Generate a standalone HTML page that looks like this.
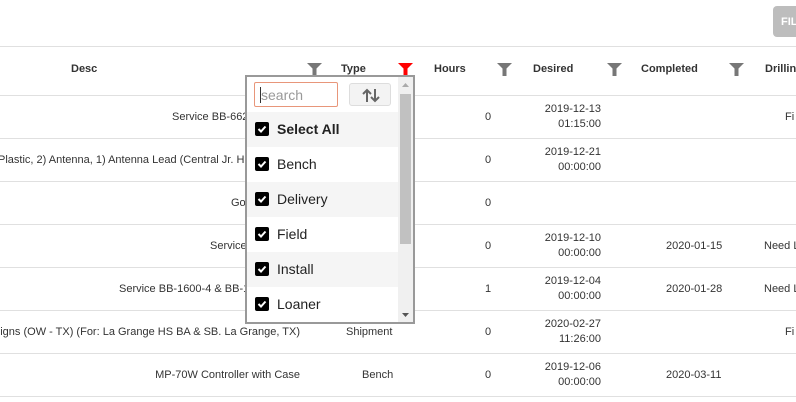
<!DOCTYPE html>
<html><head><meta charset="utf-8"><style>
*{box-sizing:border-box;margin:0;padding:0}
body{width:796px;height:402px;overflow:hidden;background:#fff;font-family:"Liberation Sans",sans-serif;font-size:11px;color:#333;position:relative}
.a{position:absolute;white-space:nowrap}
.hl{position:absolute;left:0;width:796px;height:1px;background:#e0e0e0}
.h{font-weight:bold;font-size:11px;color:#333;top:63px}
.fn{position:absolute;top:63px;width:15px;height:13px}
.r{text-align:right}
.d{line-height:15px;text-align:right}
.pop{position:absolute;left:245px;top:75px;width:170px;height:249px;border:2px solid #999;background:#fff}
.it{position:absolute;left:0;width:151px;height:35px;font-size:14px;color:#222}
.it .cb{position:absolute;left:8px;top:10px;width:14px;height:14px;background:#000;border-radius:2px}
.it .cb svg{position:absolute;left:2px;top:2px}
.it span{position:absolute;left:30px;top:9px}
</style></head><body>
<div class="a" style="left:773px;top:6px;width:30px;height:31px;background:#bdbdbd;border-radius:4px;color:#fff;font-weight:bold;font-size:11px;padding:10px 0 0 8px">FIL</div>
<div class="hl" style="top:46px"></div>
<div class="hl" style="top:95px"></div>
<div class="hl" style="top:138px"></div>
<div class="hl" style="top:181px"></div>
<div class="hl" style="top:224px"></div>
<div class="hl" style="top:267px"></div>
<div class="hl" style="top:310px"></div>
<div class="hl" style="top:353px"></div>
<div class="hl" style="top:396px"></div>

<div class="a h" style="left:71px">Desc</div>
<div class="a h" style="left:341px">Type</div>
<div class="a h" style="left:434px">Hours</div>
<div class="a h" style="left:533px">Desired</div>
<div class="a h" style="left:641px">Completed</div>
<div class="a h" style="left:765px">Drilling</div>
<svg class="fn" style="left:307px" viewBox="0 0 15 13"><path d="M0 0H15L9.5 5.5V13H5.5V5.5Z" fill="#777"/></svg>
<svg class="fn" style="left:398px" viewBox="0 0 15 13"><path d="M0 0H15L9.5 5.5V13H5.5V5.5Z" fill="#f00"/></svg>
<svg class="fn" style="left:497px" viewBox="0 0 15 13"><path d="M0 0H15L9.5 5.5V13H5.5V5.5Z" fill="#777"/></svg>
<svg class="fn" style="left:607px" viewBox="0 0 15 13"><path d="M0 0H15L9.5 5.5V13H5.5V5.5Z" fill="#777"/></svg>
<svg class="fn" style="left:729px" viewBox="0 0 15 13"><path d="M0 0H15L9.5 5.5V13H5.5V5.5Z" fill="#777"/></svg>

<!-- row1 -->
<div class="a" style="left:172px;top:111px">Service BB-6625</div>
<div class="a" style="left:485px;top:111px">0</div>
<div class="a d" style="right:195px;top:102px">2019-12-13<br>01:15:00</div>
<div class="a" style="left:785px;top:111px">Fi</div>
<!-- row2 -->
<div class="a" style="left:-2px;top:154px">Plastic, 2) Antenna, 1) Antenna Lead (Central Jr. Hi</div>
<div class="a" style="left:485px;top:154px">0</div>
<div class="a d" style="right:195px;top:145px">2019-12-21<br>00:00:00</div>
<!-- row3 -->
<div class="a" style="left:231px;top:197px">Go</div>
<div class="a" style="left:485px;top:197px">0</div>
<!-- row4 -->
<div class="a" style="left:210px;top:240px">Service</div>
<div class="a" style="left:485px;top:240px">0</div>
<div class="a d" style="right:195px;top:231px">2019-12-10<br>00:00:00</div>
<div class="a" style="left:666px;top:240px">2020-01-15</div>
<div class="a" style="left:764px;top:240px">Need L</div>
<!-- row5 -->
<div class="a" style="left:119px;top:283px">Service BB-1600-4 &amp; BB-1</div>
<div class="a" style="left:485px;top:283px">1</div>
<div class="a d" style="right:195px;top:274px">2019-12-04<br>00:00:00</div>
<div class="a" style="left:666px;top:283px">2020-01-28</div>
<div class="a" style="left:764px;top:283px">Need L</div>
<!-- row6 -->
<div class="a r" style="right:496px;top:326px">Signs (OW - TX) (For: La Grange HS BA &amp; SB. La Grange, TX)</div>
<div class="a" style="left:346px;top:326px">Shipment</div>
<div class="a" style="left:485px;top:326px">0</div>
<div class="a d" style="right:195px;top:317px">2020-02-27<br>11:26:00</div>
<div class="a" style="left:785px;top:326px">Fi</div>
<!-- row7 -->
<div class="a r" style="right:496px;top:369px">MP-70W Controller with Case</div>
<div class="a" style="left:362px;top:369px">Bench</div>
<div class="a" style="left:485px;top:369px">0</div>
<div class="a d" style="right:195px;top:360px">2019-12-06<br>00:00:00</div>
<div class="a" style="left:666px;top:369px">2020-03-11</div>

<div class="pop">
 <div class="a" style="left:7px;top:5px;width:84px;height:25px;border:1px solid #e8967a;border-radius:2px;font-size:14px;color:#999;padding:4px 0 0 5px"><span style="border-left:1px solid #333;padding-left:0">search</span></div>
 <div class="a" style="left:102px;top:6px;width:42px;height:23px;border:1px solid #ddd;border-radius:3px;background:#f3f3f3">
  <svg width="42" height="23" viewBox="0 0 42 23"><path d="M17 18V6M13 10l4-4 4 4M25 5v12M21 13l4 4 4-4" stroke="#666" stroke-width="2" fill="none"/></svg>
 </div>
 <div class="a" style="left:151px;top:0;width:15px;height:245px;background:#f0f0f0">
  <div class="a" style="left:2px;top:17px;width:11px;height:150px;background:#c1c1c1"></div>
  <svg class="a" style="left:4px;top:6px" width="7" height="4"><path d="M0 4L3.5 0L7 4Z" fill="#aaa"/></svg>
  <svg class="a" style="left:4px;top:236px" width="7" height="4"><path d="M0 0L3.5 4L7 0Z" fill="#555"/></svg>
 </div>
 <div class="it" style="top:35px;background:#f5f5f5;font-weight:bold"><div class="cb"><svg width="10" height="10"><path d="M1.5 5l2.5 2.5 4.5-5" stroke="#fff" stroke-width="2" fill="none"/></svg></div><span>Select All</span></div>
 <div class="it" style="top:70px"><div class="cb"><svg width="10" height="10"><path d="M1.5 5l2.5 2.5 4.5-5" stroke="#fff" stroke-width="2" fill="none"/></svg></div><span>Bench</span></div>
 <div class="it" style="top:105px;background:#f5f5f5"><div class="cb"><svg width="10" height="10"><path d="M1.5 5l2.5 2.5 4.5-5" stroke="#fff" stroke-width="2" fill="none"/></svg></div><span>Delivery</span></div>
 <div class="it" style="top:140px"><div class="cb"><svg width="10" height="10"><path d="M1.5 5l2.5 2.5 4.5-5" stroke="#fff" stroke-width="2" fill="none"/></svg></div><span>Field</span></div>
 <div class="it" style="top:175px;background:#f5f5f5"><div class="cb"><svg width="10" height="10"><path d="M1.5 5l2.5 2.5 4.5-5" stroke="#fff" stroke-width="2" fill="none"/></svg></div><span>Install</span></div>
 <div class="it" style="top:210px"><div class="cb"><svg width="10" height="10"><path d="M1.5 5l2.5 2.5 4.5-5" stroke="#fff" stroke-width="2" fill="none"/></svg></div><span>Loaner</span></div>
</div>
</body></html>
